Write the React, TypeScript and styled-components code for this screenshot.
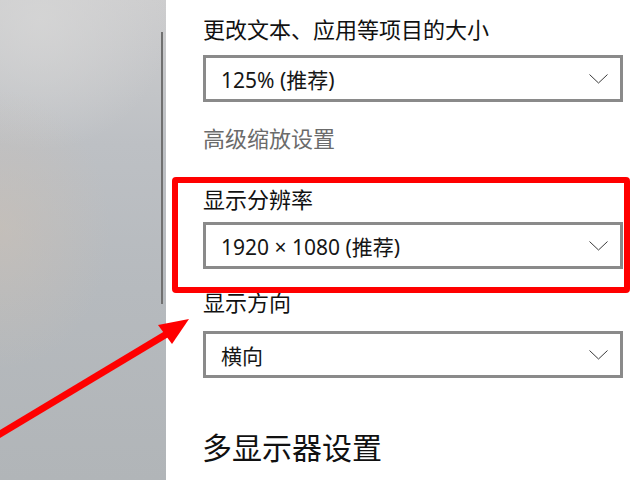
import { createGlobalStyle, styled } from "styled-components";

const GlobalStyle = createGlobalStyle`
  html, body {
    margin: 0;
    padding: 0;
    background: #fff;
  }
  body {
    font-family: "Noto Sans", "Noto Sans CJK SC", sans-serif;
  }
`;

const Page = styled.div`
  position: relative;
  display: flex;
  width: 640px;
  height: 480px;
  overflow: hidden;
  background: #fff;
`;

const Sidebar = styled.div`
  width: 166px;
  flex-shrink: 0;
  display: flex;
  justify-content: flex-end;
  align-items: flex-start;
  padding: 32px 3px 0 0;
  box-sizing: border-box;
  background:
    radial-gradient(ellipse 110px 140px at 0px 230px, rgba(204, 192, 180, 0.55), rgba(204, 192, 180, 0)),
    radial-gradient(ellipse 130px 130px at 40px 20px, rgba(214, 214, 214, 0.8), rgba(214, 214, 214, 0)),
    linear-gradient(180deg, #cdcdce 0%, #bdc0c4 30%, #b6babe 60%, #b1b5b8 100%);
`;

const ScrollThumb = styled.div`
  width: 2px;
  height: 272px;
  background: #707070;
`;

const Content = styled.main`
  flex: 1;
  display: flex;
  flex-direction: column;
  align-items: flex-start;
  padding: 18px 0 0 37px;
`;

const Title = styled.div<{ $gap: number }>`
  margin-top: ${(p) => p.$gap}px;
  font-size: 22px;
  line-height: 22px;
  color: #111;
`;

const Link = styled.div`
  margin-top: 25px;
  font-size: 22px;
  line-height: 22px;
  color: #6b6b6b;
`;

const Heading = styled.h2`
  margin: 55px 0 0 -1px;
  font-size: 30px;
  line-height: 30px;
  font-weight: 400;
  color: #111;
`;

const Select = styled.div<{ $gap: number }>`
  margin-top: ${(p) => p.$gap}px;
  width: 420px;
  height: 47px;
  box-sizing: border-box;
  border: 3px solid #8a8a8a;
  display: flex;
  align-items: center;
  justify-content: space-between;
  padding: 0 12px 0 15px;
  font-size: 21px;
  color: #161616;
`;

const Chevron = () => (
  <svg width="19" height="10" viewBox="0 0 19 10">
    <polyline points="0.5,0.5 9.5,9 18.5,0.5" fill="none" stroke="#3a3a3a" strokeWidth="1" />
  </svg>
);

const Highlight = styled.div`
  position: absolute;
  left: 172px;
  top: 177px;
  width: 458px;
  height: 116px;
  box-sizing: border-box;
  border: 6px solid #ff0000;
  border-radius: 4px;
  pointer-events: none;
`;

const Overlay = styled.svg`
  position: absolute;
  left: 0;
  top: 0;
  pointer-events: none;
`;

export default function App() {
  return (
    <>
      <GlobalStyle />
      <Page>
        <Sidebar>
          <ScrollThumb />
        </Sidebar>
        <Content>
          <Title $gap={0}>更改文本、应用等项目的大小</Title>
          <Select $gap={15}>
            <span>125% (推荐)</span>
            <Chevron />
          </Select>
          <Link>高级缩放设置</Link>
          <Title $gap={39}>显示分辨率</Title>
          <Select $gap={12}>
            <span>1920 × 1080 (推荐)</span>
            <Chevron />
          </Select>
          <Title $gap={22}>显示方向</Title>
          <Select $gap={18}>
            <span>横向</span>
            <Chevron />
          </Select>
          <Heading>多显示器设置</Heading>
        </Content>
        <Highlight />
        <Overlay width="640" height="480" viewBox="0 0 640 480">
          <line x1="-5" y1="437" x2="170" y2="332" stroke="#ff0000" strokeWidth="7" />
          <polygon points="189,319 158,325 172,344" fill="#ff0000" />
        </Overlay>
      </Page>
    </>
  );
}
